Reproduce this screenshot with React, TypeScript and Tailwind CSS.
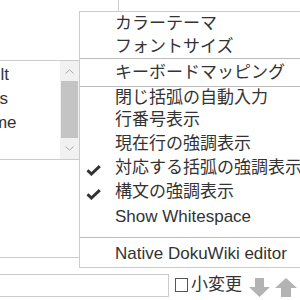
import * as React from 'react'

const keymaps = ['default', 'emacs', 'sublime', 'vim']

function Check() {
  return (
    <svg width="15" height="11" viewBox="0 0 15 11" className="block">
      <polyline
        points="1.5,5.2 5.4,9 13.8,1.2"
        fill="none"
        stroke="#333"
        strokeWidth="3"
      />
    </svg>
  )
}

function Chevron({ up }: { up?: boolean }) {
  return (
    <svg width="9" height="5" viewBox="0 0 9 5" className="block">
      <polyline
        points={up ? '0.5,4.5 4.5,0.8 8.5,4.5' : '0.5,0.5 4.5,4.2 8.5,0.5'}
        fill="none"
        stroke="#a8a8a8"
        strokeWidth="1"
      />
    </svg>
  )
}

function Arrows() {
  return (
    <svg width="50" height="20" viewBox="0 0 50 20" className="block">
      <polygon points="6,0 15,0 15,9 21,9 10.5,19 0,9 6,9" fill="#b3b3b3" />
      <polygon points="37,0 48,10 42,10 42,19 32,19 32,10 26,10" fill="#b3b3b3" />
    </svg>
  )
}

type Item = { label: string; h: string; checked?: boolean }

const items: Item[] = [
  { label: '閉じ括弧の自動入力', h: 'h-[21px] leading-[21px]' },
  { label: '行番号表示', h: 'h-6 leading-6' },
  { label: '現在行の強調表示', h: 'h-6 leading-6' },
  { label: '対応する括弧の強調表示', h: 'h-6 leading-6', checked: true },
  { label: '構文の強調表示', h: 'h-6 leading-6', checked: true },
  { label: 'Show Whitespace', h: 'h-[25px] leading-[25px]' },
]

function MenuRow({ label, h, checked }: Item) {
  return (
    <div className={`flex items-center whitespace-nowrap ${h}`}>
      <div className="w-[35px] pl-[6px] pt-[5px]">{checked && <Check />}</div>
      <span>{label}</span>
    </div>
  )
}

export default function App() {
  return (
    <div className="relative w-[300px] h-[300px] overflow-hidden bg-white text-[17px] text-[#333] font-['Liberation_Sans','Noto_Sans_CJK_JP',sans-serif]">
      {/* editor textarea */}
      <div className="-mt-px -ml-px w-[120px] h-[259px] border border-[#ccc] bg-white" />

      {/* summary row */}
      <div className="mt-[14px] flex items-center">
        <div className="-ml-px w-[170px] h-[23px] border border-[#ccc]" />
        <div className="ml-[6px] w-[13px] h-[14px] border border-[#555] bg-white" />
        <span className="ml-[3px] leading-6">小変更</span>
        <div className="ml-[7px] mt-[6px]">
          <Arrows />
        </div>
      </div>

      {/* keymap listbox */}
      <div className="absolute left-[-60px] top-[60px] w-[140px] h-[100px] border border-[#ccc] bg-white flex">
        <div className="flex-1 pt-[2px] pl-[17px]">
          {keymaps.map(k => (
            <div key={k} className="h-6 leading-6">
              {k}
            </div>
          ))}
        </div>
        <div className="w-[19px] bg-[#f1f1f1] flex flex-col">
          <div className="h-[20px] flex items-center justify-center">
            <Chevron up />
          </div>
          <div className="mx-[1px] h-[57px] bg-[#c4c4c4]" />
          <div className="flex-1 flex items-center justify-center">
            <Chevron />
          </div>
        </div>
      </div>

      {/* settings menu */}
      <div className="absolute left-[79px] top-[11px] w-[250px] border border-[#ccc] bg-white">
        <div className="pl-[35px] h-6 leading-6 whitespace-nowrap">カラーテーマ</div>
        <div className="pl-[35px] h-[22px] leading-[22px] whitespace-nowrap">フォントサイズ</div>
        <div className="border-y border-[#bbb] pl-[35px] h-[29px] leading-[27px] whitespace-nowrap">
          キーボードマッピング
        </div>
        {items.map(it => (
          <MenuRow key={it.label} {...it} />
        ))}
        <div className="mt-[8px] border-t border-[#bbb] pt-[3px] pl-[35px] h-[30px] leading-[26px] whitespace-nowrap">
          Native DokuWiki editor
        </div>
      </div>
    </div>
  )
}
